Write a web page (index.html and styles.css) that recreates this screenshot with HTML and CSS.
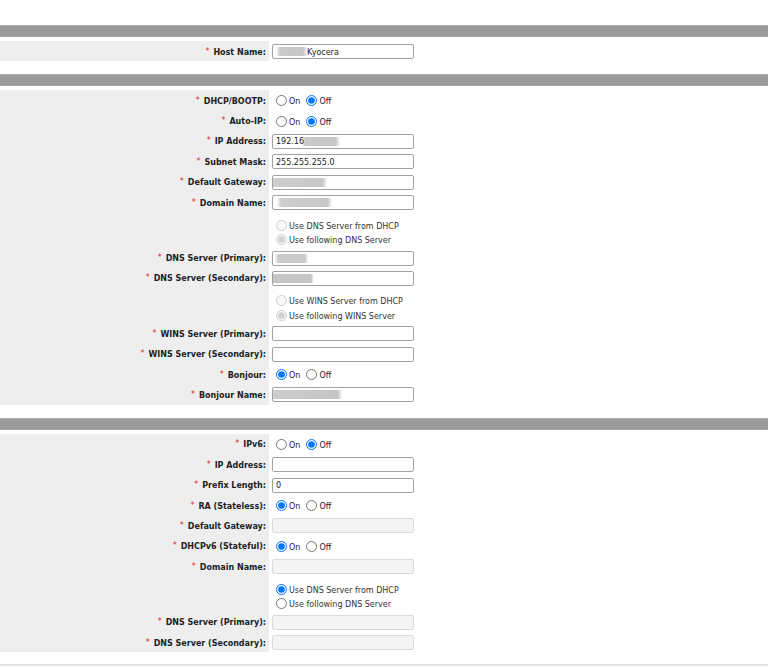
FILE: index.html
```html
<!DOCTYPE html>
<html>
<head>
<meta charset="utf-8">
<link rel="stylesheet" href="styles.css">
</head>
<body>
<div class="page">
  <div class="bar"></div>
  <div class="form">
    <div class="lbl short"><span class="req">*</span>Host Name:</div>
    <div class="val short"><input class="txt b-host" type="text" value="Kyocera"></div>
  </div>

  <div class="bar"></div>
  <div class="form">
    <div class="lbl"><span class="req">*</span>DHCP/BOOTP:</div>
    <div class="val"><label class="opt"><input type="radio" name="dhcp">On</label><label class="opt"><input type="radio" name="dhcp" checked>Off</label></div>

    <div class="lbl"><span class="req">*</span>Auto-IP:</div>
    <div class="val"><label class="opt"><input type="radio" name="autoip">On</label><label class="opt"><input type="radio" name="autoip" checked>Off</label></div>

    <div class="lbl"><span class="req">*</span>IP Address:</div>
    <div class="val"><input class="txt b-ip" type="text" value="192.16"></div>

    <div class="lbl"><span class="req">*</span>Subnet Mask:</div>
    <div class="val"><input class="txt" type="text" value="255.255.255.0"></div>

    <div class="lbl"><span class="req">*</span>Default Gateway:</div>
    <div class="val"><input class="txt b-gw" type="text" value=""></div>

    <div class="lbl"><span class="req">*</span>Domain Name:</div>
    <div class="val"><input class="txt b-dom" type="text" value=""></div>

    <div class="lbl tall"></div>
    <div class="val stack">
      <label class="line"><input type="radio" name="dns4" disabled>Use DNS Server from DHCP</label>
      <label class="line"><input type="radio" name="dns4" disabled checked>Use following DNS Server</label>
    </div>

    <div class="lbl"><span class="req">*</span>DNS Server (Primary):</div>
    <div class="val"><input class="txt b-dns1" type="text" value=""></div>

    <div class="lbl"><span class="req">*</span>DNS Server (Secondary):</div>
    <div class="val"><input class="txt b-dns2" type="text" value=""></div>

    <div class="lbl tall"></div>
    <div class="val stack">
      <label class="line"><input type="radio" name="wins" disabled>Use WINS Server from DHCP</label>
      <label class="line"><input type="radio" name="wins" disabled checked>Use following WINS Server</label>
    </div>

    <div class="lbl"><span class="req">*</span>WINS Server (Primary):</div>
    <div class="val"><input class="txt" type="text" value=""></div>

    <div class="lbl"><span class="req">*</span>WINS Server (Secondary):</div>
    <div class="val"><input class="txt" type="text" value=""></div>

    <div class="lbl"><span class="req">*</span>Bonjour:</div>
    <div class="val"><label class="opt"><input type="radio" name="bonjour" checked>On</label><label class="opt"><input type="radio" name="bonjour">Off</label></div>

    <div class="lbl"><span class="req">*</span>Bonjour Name:</div>
    <div class="val"><input class="txt b-bon" type="text" value=""></div>
  </div>

  <div class="bar"></div>
  <div class="form last">
    <div class="lbl"><span class="req">*</span>IPv6:</div>
    <div class="val"><label class="opt"><input type="radio" name="ipv6">On</label><label class="opt"><input type="radio" name="ipv6" checked>Off</label></div>

    <div class="lbl"><span class="req">*</span>IP Address:</div>
    <div class="val"><input class="txt" type="text" value=""></div>

    <div class="lbl"><span class="req">*</span>Prefix Length:</div>
    <div class="val"><input class="txt" type="text" value="0"></div>

    <div class="lbl"><span class="req">*</span>RA (Stateless):</div>
    <div class="val"><label class="opt"><input type="radio" name="ra" checked>On</label><label class="opt"><input type="radio" name="ra">Off</label></div>

    <div class="lbl"><span class="req">*</span>Default Gateway:</div>
    <div class="val"><input class="txt" type="text" value="" disabled></div>

    <div class="lbl"><span class="req">*</span>DHCPv6 (Stateful):</div>
    <div class="val"><label class="opt"><input type="radio" name="dhcp6" checked>On</label><label class="opt"><input type="radio" name="dhcp6">Off</label></div>

    <div class="lbl"><span class="req">*</span>Domain Name:</div>
    <div class="val"><input class="txt" type="text" value="" disabled></div>

    <div class="lbl tall"></div>
    <div class="val stack">
      <label class="line"><input type="radio" name="dns6" checked>Use DNS Server from DHCP</label>
      <label class="line"><input type="radio" name="dns6">Use following DNS Server</label>
    </div>

    <div class="lbl"><span class="req">*</span>DNS Server (Primary):</div>
    <div class="val"><input class="txt" type="text" value="" disabled></div>

    <div class="lbl"><span class="req">*</span>DNS Server (Secondary):</div>
    <div class="val"><input class="txt" type="text" value="" disabled></div>
  </div>
  <div class="foot"></div>
</div>
</body>
</html>
```

FILE: styles.css
```css
html, body {
  margin: 0;
  padding: 0;
  background: #fff;
}
.page {
  padding-top: 25px;
  font-family: "DejaVu Sans", Verdana, sans-serif;
  font-size: 8px;
  color: #222;
}
.bar {
  height: 12px;
  box-sizing: border-box;
  background: #9b9b9b;
  border-top: 1px solid #b0b0b0;
  border-bottom: 1px solid #a4a4a4;
  margin-bottom: 4px;
}
.form {
  display: grid;
  grid-template-columns: 269px 1fr;
  margin-bottom: 13px;
}
.form.last {
  margin-bottom: 12px;
}
.lbl, .val {
  height: 20.4px;
  box-sizing: border-box;
}
.lbl.short, .val.short {
  height: 20px;
}
.lbl.tall {
  height: 35px;
}
.lbl {
  background: #eeeeee;
  display: flex;
  align-items: center;
  justify-content: flex-end;
  padding-right: 3px;
  padding-top: 2px;
  font-weight: bold;
  white-space: nowrap;
  color: #222;
}
.req {
  color: #e3262a;
  font-weight: normal;
  margin-right: 4px;
  position: relative;
  top: -1px;
}
.val {
  display: flex;
  align-items: center;
  padding-left: 3px;
  padding-top: 1px;
}
.val.stack {
  height: 35px;
  flex-direction: column;
  align-items: flex-start;
  justify-content: flex-start;
  padding-top: 6px;
}
.txt {
  box-sizing: border-box;
  width: 142px;
  height: 15px;
  margin: 0;
  padding: 1px 3px 0;
  border: 1px solid #a2a2a2;
  border-radius: 2px;
  font-family: "DejaVu Sans", Verdana, sans-serif;
  font-size: 8px;
  color: #222;
  background-color: #fff;
  background-repeat: no-repeat;
  background-size: 100% 9px;
  background-position: 0 center;
  outline: none;
}
.txt:disabled {
  background-color: #f4f4f4;
  border-color: #dadada;
}
.opt {
  display: flex;
  align-items: center;
  margin-left: 4px;
  margin-right: 2px;
  padding-top: 2px;
}
.opt + .opt {
  margin-left: 4px;
}
.opt input, .line input {
  width: 11px;
  height: 11px;
  margin: 0 2px 0 0;
  position: relative;
  top: -1px;
}
.line {
  display: flex;
  align-items: center;
  height: 14px;
  margin-left: 4px;
  padding-top: 1px;
  color: #333;
}
.b-host {
  text-indent: 31px;
  background-image: linear-gradient(to right, transparent 3px, #cacaca 7px, #c6c6c6 30px, transparent 35px);
}
.b-ip {
  background-image: linear-gradient(to right, transparent 29px, #c8c8c8 32px, #c8c8c8 63px, transparent 67px);
}
.b-gw {
  background-image: linear-gradient(to right, #cdcdcd 1px, #c8c8c8 50px, transparent 54px);
}
.b-dom {
  background-image: linear-gradient(to right, transparent 4px, #cdcdcd 8px, #c8c8c8 55px, transparent 59px);
}
.b-dns1 {
  background-image: linear-gradient(to right, transparent 2px, #c9c9c9 5px, #c9c9c9 32px, transparent 35px);
}
.b-dns2 {
  background-image: linear-gradient(to right, #c6c6c6 0px, #c6c6c6 38px, transparent 41px);
}
.b-bon {
  background-image: linear-gradient(to right, #cccccc 1px, #c6c6c6 65px, transparent 69px);
}
.foot {
  border-top: 2px solid #e2e2e2;
}
```
